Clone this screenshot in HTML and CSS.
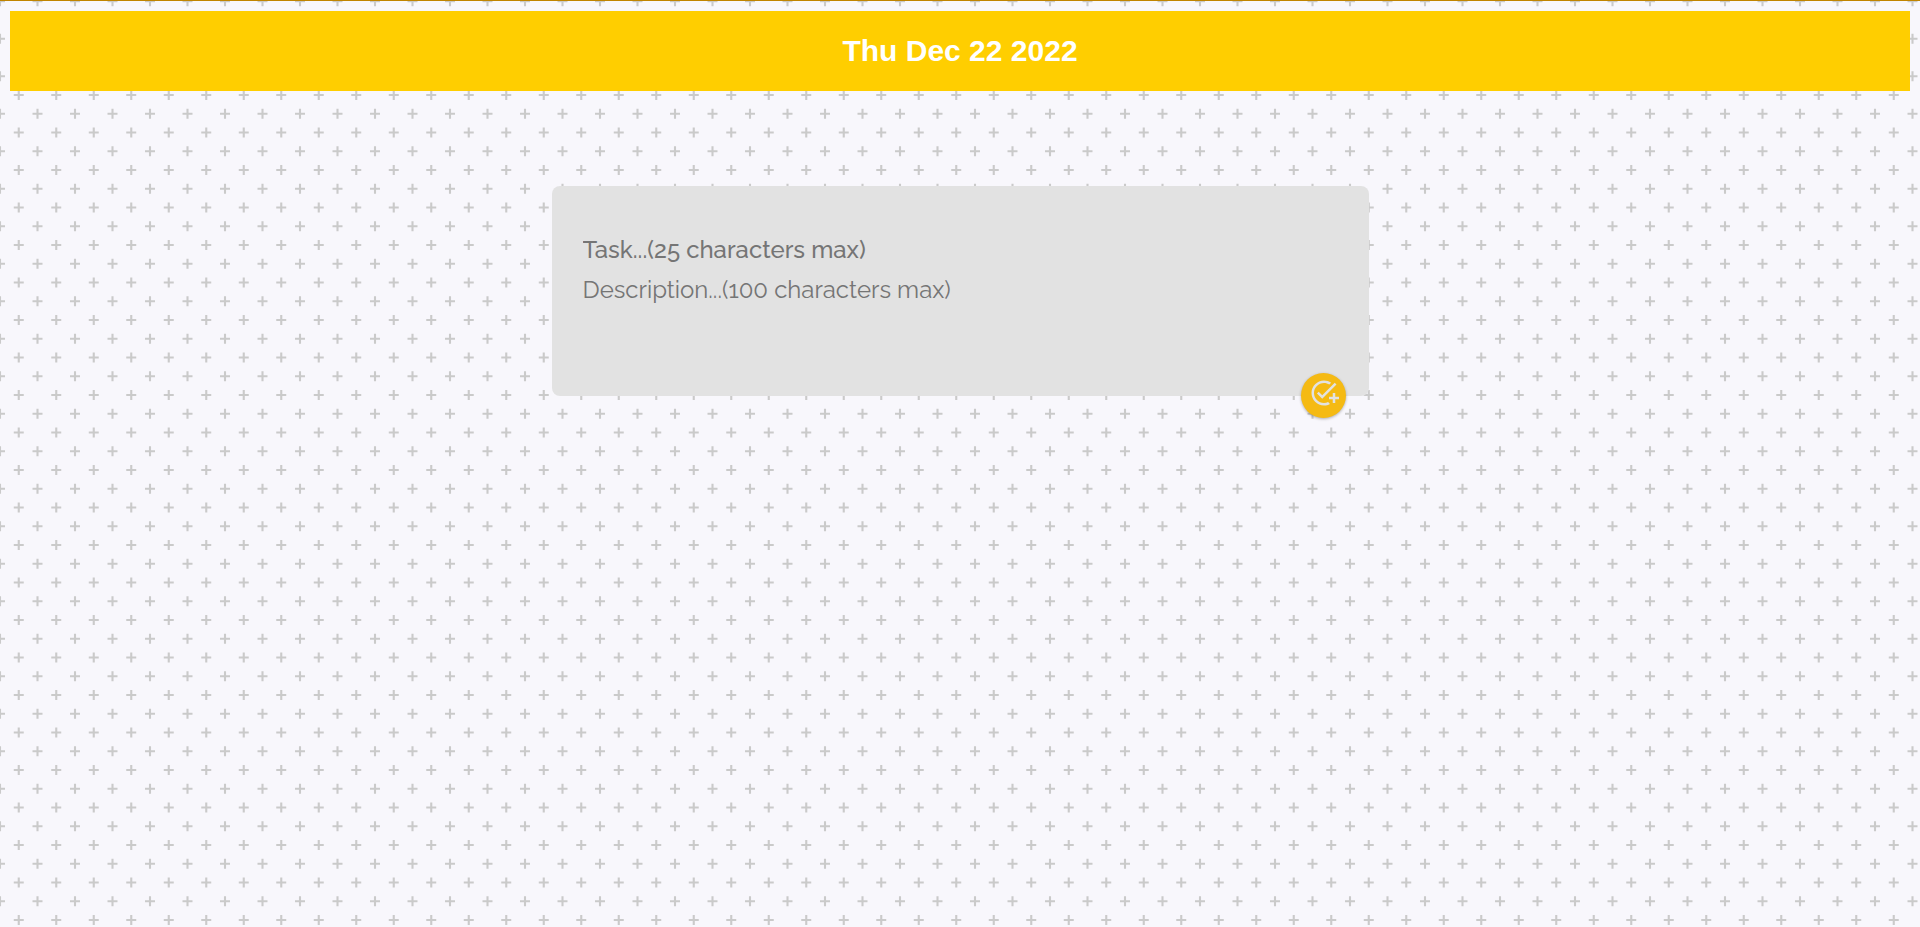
FILE: index.html
```html
<!DOCTYPE html>
<html lang="en">
<head>
<meta charset="utf-8">
<meta name="viewport" content="width=device-width, initial-scale=1">
<title>Tasks</title>
<link rel="stylesheet" href="styles.css">
</head>
<body class="page">
<header class="banner">
  <h1 class="banner-date">Thu Dec 22 2022</h1>
</header>
<main class="content">
  <form class="task-form">
    <input class="field field-task" type="text" maxlength="25" aria-label="Task" placeholder="Task...(25 characters max)">
    <textarea class="field field-description" maxlength="100" rows="3" aria-label="Description" placeholder="Description...(100 characters max)"></textarea>
    <button class="add-button" type="button" aria-label="Add task">
      <svg class="add-icon" viewBox="0 0 24 24" aria-hidden="true"><path d="M22 5.18 10.59 16.6l-4.24-4.24 1.41-1.41 2.83 2.83 10-10L22 5.18zM12 20c-4.41 0-8-3.59-8-8s3.59-8 8-8c1.57 0 3.04.46 4.28 1.25l1.45-1.45C16.1 2.67 14.13 2 12 2 6.48 2 2 6.48 2 12s4.48 10 10 10c1.73 0 3.36-.44 4.78-1.22l-1.5-1.5c-1 .46-2.11.72-3.28.72zm7-5h-3v2h3v3h2v-3h3v-2h-3v-3h-2v3z"/></svg>
    </button>
  </form>
</main>
</body>
</html>
```
FILE: styles.css
```css
* {
  box-sizing: border-box;
}

.page {
  min-height: 100vh;
  margin: 0;
  border-top: 1px solid #c08400;
  font-family: "Liberation Sans", Arial, sans-serif;
  background-color: #f8f7fc;
  background-image: url("data:image/svg+xml,%3Csvg xmlns='http://www.w3.org/2000/svg' width='75' height='75'%3E%3Cdefs%3E%3Cpath id='p' d='M-5 0H5M0 -5V5' stroke='%23cacaca' stroke-width='2.1'/%3E%3Cg id='r'%3E%3Cuse href='%23p'/%3E%3Cuse href='%23p' x='37.5'/%3E%3Cuse href='%23p' x='75'/%3E%3C/g%3E%3C/defs%3E%3Cuse href='%23r' y='1.25'/%3E%3Cuse href='%23r' y='38.75'/%3E%3Cuse href='%23r' y='76.25'/%3E%3Cuse href='%23r' x='18.75' y='20'/%3E%3Cuse href='%23r' x='18.75' y='57.5'/%3E%3C/svg%3E");
}

.banner {
  margin: 10px 10px 0;
  padding: 20px;
  background: #ffce00;
  color: #fff;
  text-align: center;
}

.banner-date {
  margin: 0;
  font-size: 30px;
  line-height: 40px;
  font-weight: 700;
}

.content {
  padding: 95px 16px 40px;
}

.task-form {
  position: relative;
  display: flex;
  flex-direction: column;
  max-width: 817px;
  margin: 0 auto;
  padding: 44px 31px 29px;
  border-radius: 8px;
  background: #e2e2e2;
}

.field {
  width: 100%;
  margin: 0;
  padding: 0;
  border: 0;
  outline: 0;
  background: transparent;
  color: #444;
  font-family: Raleway, Lato, "Open Sans", sans-serif;
  font-size: 24px;
  line-height: 40px;
  resize: none;
}

.field::placeholder {
  color: #757575;
  opacity: 1;
}

.field-task {
  height: 40px;
  font-weight: 500;
}

.field-description {
  height: 97px;
  overflow: hidden;
  font-weight: 400;
}

.add-button {
  position: absolute;
  right: 23px;
  bottom: -22px;
  width: 45px;
  height: 45px;
  padding: 0 0 5px 1px;
  display: flex;
  align-items: center;
  justify-content: center;
  border: 0;
  border-radius: 50%;
  background: #f5ba13;
  box-shadow: 0 1px 3px rgba(0, 0, 0, 0.3);
  cursor: pointer;
}

.add-icon {
  width: 30px;
  height: 30px;
  flex: none;
  fill: #e2e2e2;
}
```
